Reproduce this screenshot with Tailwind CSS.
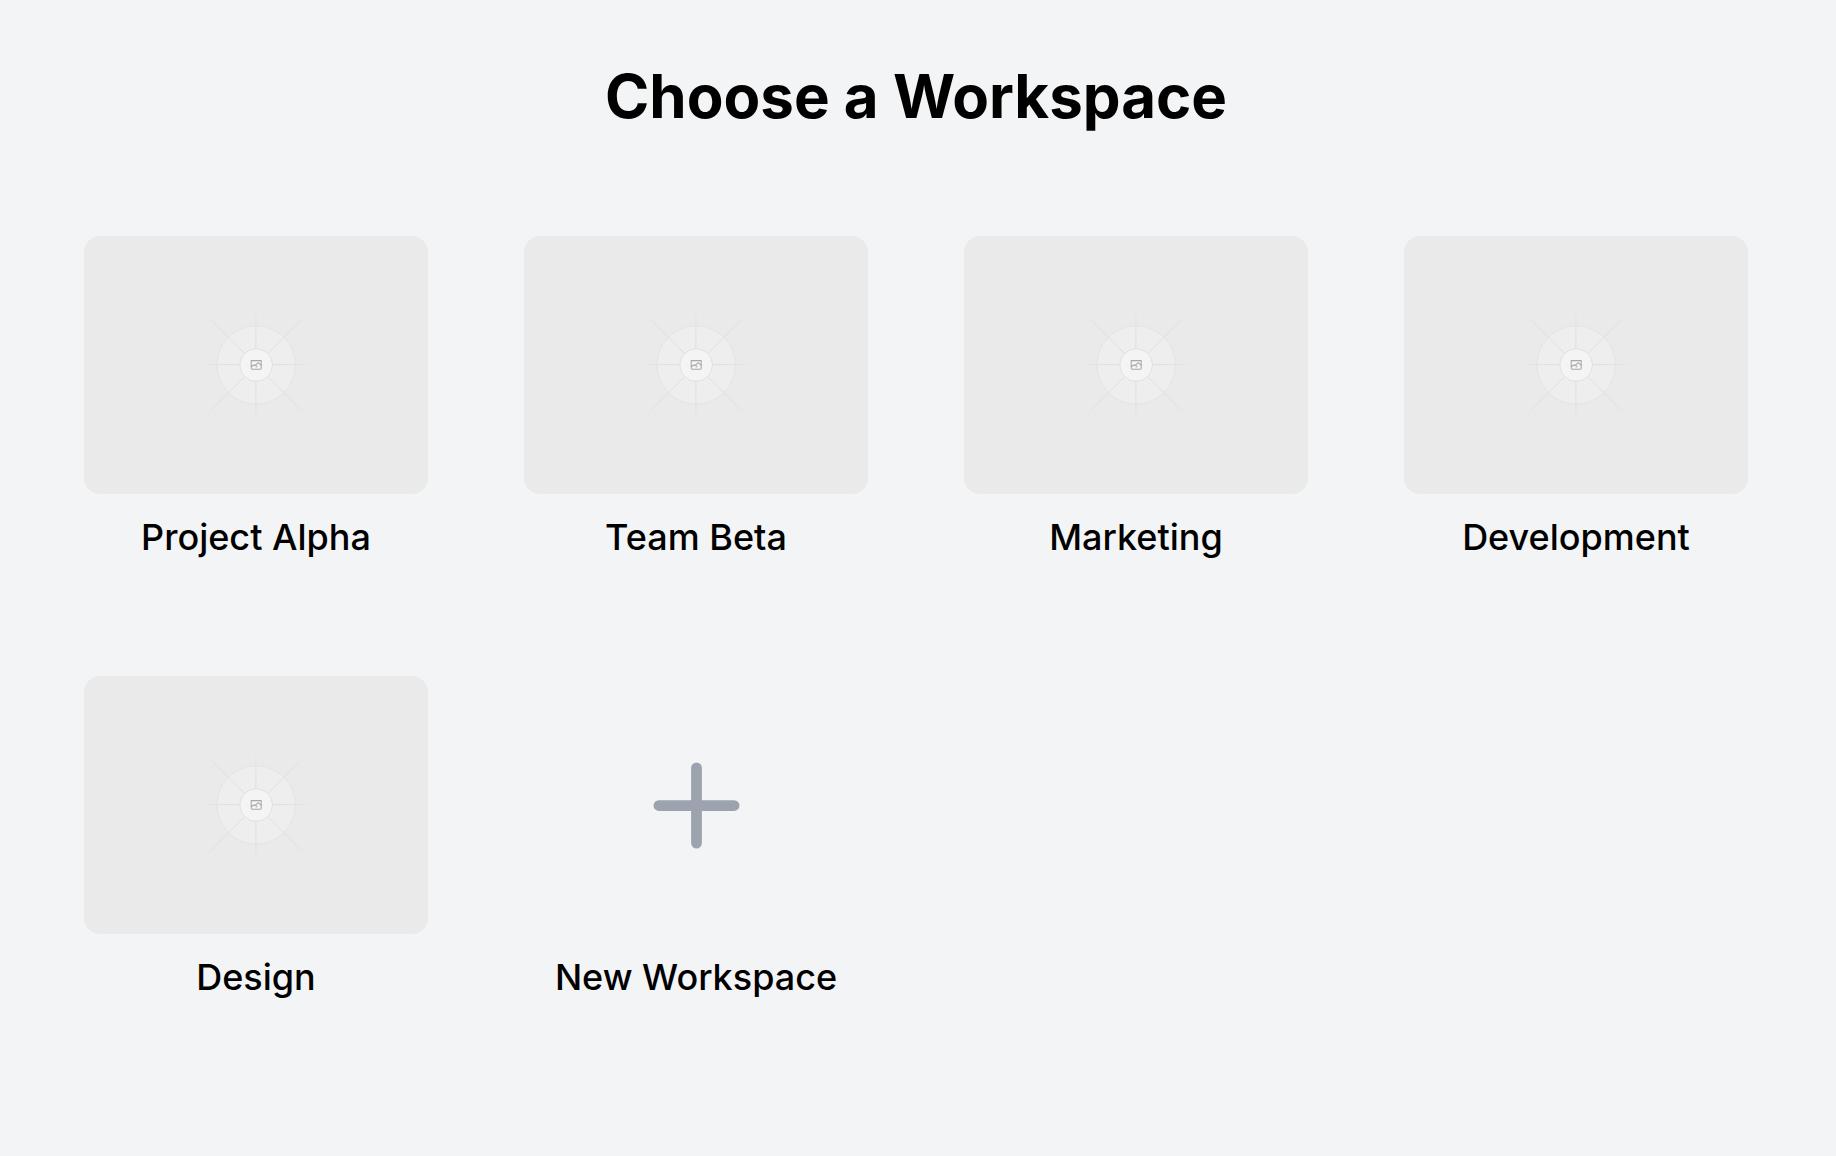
<!DOCTYPE html>
<html lang="en">
<head>
<meta charset="utf-8">
<meta name="viewport" content="width=device-width, initial-scale=1">
<title>Choose a Workspace</title>
<script src="https://cdn.jsdelivr.net/npm/@tailwindcss/browser@4"></script>
</head>
<body class="min-h-screen bg-gray-100 font-['Inter',sans-serif] text-black">
<svg class="absolute size-0" aria-hidden="true">
  <defs>
    <linearGradient id="fade-x" gradientUnits="userSpaceOnUse" x1="404.5" y1="0" x2="796.9" y2="0">
      <stop stop-color="#C9C9C9" stop-opacity="0"/><stop offset=".208" stop-color="#C9C9C9"/><stop offset=".792" stop-color="#C9C9C9"/><stop offset="1" stop-color="#C9C9C9" stop-opacity="0"/>
    </linearGradient>
    <linearGradient id="fade-y" gradientUnits="userSpaceOnUse" x1="0" y1="403.8" x2="0" y2="796.2">
      <stop stop-color="#C9C9C9" stop-opacity="0"/><stop offset=".208" stop-color="#C9C9C9"/><stop offset=".792" stop-color="#C9C9C9"/><stop offset="1" stop-color="#C9C9C9" stop-opacity="0"/>
    </linearGradient>
    <symbol id="placeholder" viewBox="0 150 1200 900">
      <rect width="1200" height="1200" fill="#EAEAEA"/>
      <g opacity=".5" fill="none" stroke-width="2.418">
        <circle cx="600.7" cy="599.9" r="136.6" fill="#FAFAFA" stroke="#C9C9C9" opacity=".5"/>
        <path stroke="url(#fade-x)" d="M404.5 598.5H796.9"/>
        <path stroke="url(#fade-y)" d="M599.5 403.8V796.2"/>
        <path stroke="url(#fade-x)" d="M404.9 404.3L796.4 795.8M404.9 795.8L796.4 404.3"/>
        <circle cx="600.7" cy="599.9" r="56.8" fill="#fff" stroke="#C9C9C9"/>
        <path fill="#666" fill-rule="evenodd" d="M616.426 586.58h-31.434v16.176l3.553-3.554.531-.531h9.068l.074-.074 8.463-8.463h2.565l7.18 7.181V586.58Zm-15.715 14.654 3.698 3.699 1.283 1.282-2.565 2.565-1.282-1.283-5.2-5.199h-6.066l-5.514 5.514-.073.073v2.876a2.418 2.418 0 0 0 2.418 2.418h26.598a2.418 2.418 0 0 0 2.418-2.418v-8.317l-8.463-8.463-7.181 7.181-.071.072Zm-19.347 5.442v4.085a6.045 6.045 0 0 0 6.046 6.045h26.598a6.044 6.044 0 0 0 6.045-6.045v-7.108l1.356-1.355-1.282-1.283-.074-.073v-17.989h-38.689v23.43l-.146.146.146.147Z"/>
      </g>
    </symbol>
  </defs>
</svg>
<main class="pt-15 pr-22 pb-16 pl-21">
  <h1 class="mb-26 text-center text-6xl/[72px] font-bold">Choose a Workspace</h1>
  <div class="grid grid-cols-4 gap-24 text-4xl/[56px] font-medium whitespace-nowrap">
    <button type="button" class="flex aspect-square flex-col">
      <svg class="h-3/4 w-full rounded-2xl" aria-hidden="true"><use href="#placeholder"/></svg>
      <span class="grid w-full grow place-items-center">Project Alpha</span>
    </button>
    <button type="button" class="flex aspect-square flex-col">
      <svg class="h-3/4 w-full rounded-2xl" aria-hidden="true"><use href="#placeholder"/></svg>
      <span class="grid w-full grow place-items-center">Team Beta</span>
    </button>
    <button type="button" class="flex aspect-square flex-col">
      <svg class="h-3/4 w-full rounded-2xl" aria-hidden="true"><use href="#placeholder"/></svg>
      <span class="grid w-full grow place-items-center">Marketing</span>
    </button>
    <button type="button" class="flex aspect-square flex-col">
      <svg class="h-3/4 w-full rounded-2xl" aria-hidden="true"><use href="#placeholder"/></svg>
      <span class="grid w-full grow place-items-center">Development</span>
    </button>
    <button type="button" class="flex aspect-square flex-col">
      <svg class="h-3/4 w-full rounded-2xl" aria-hidden="true"><use href="#placeholder"/></svg>
      <span class="grid w-full grow place-items-center">Design</span>
    </button>
    <button type="button" class="flex aspect-square flex-col">
      <span class="grid h-3/4 w-full place-items-center">
        <svg class="h-1/2 text-[#9ca3af]" viewBox="0 0 24 24" fill="none" stroke="currentColor" stroke-width="2" stroke-linecap="round" aria-hidden="true"><path d="M5 12h14M12 5v14"/></svg>
      </span>
      <span class="grid w-full grow place-items-center">New Workspace</span>
    </button>
  </div>
</main>
</body>
</html>
